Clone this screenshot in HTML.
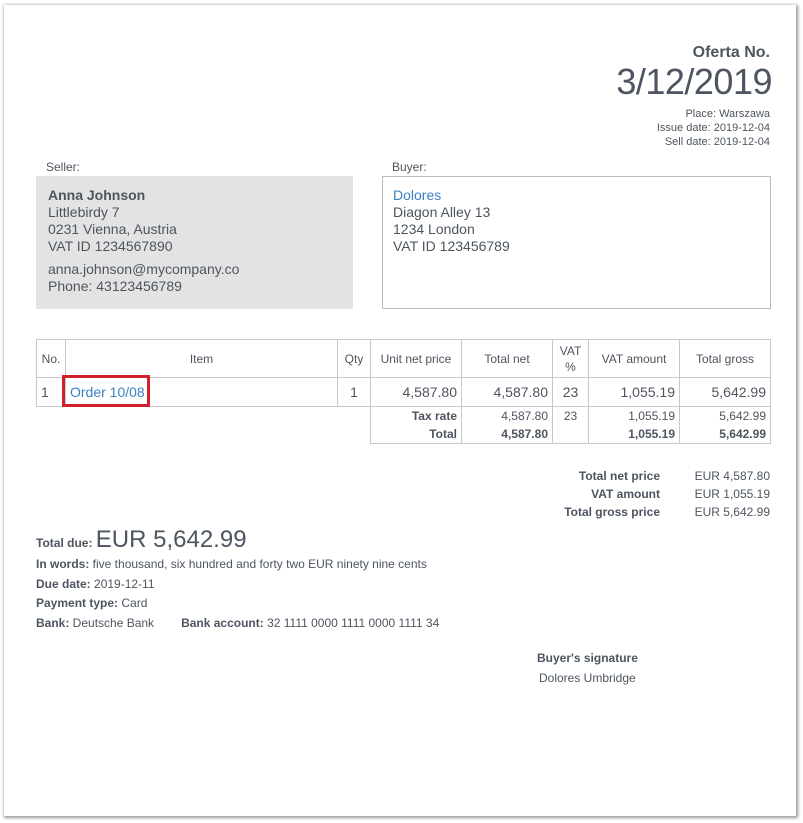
<!DOCTYPE html>
<html><head><style>
body{margin:0;width:803px;height:823px;background:#fff;font-family:"Liberation Sans",Arial,sans-serif;color:#4d5560;position:relative;overflow:hidden}
.page{position:absolute;left:4px;top:5px;width:792px;height:811px;background:#fff;box-shadow:1px 1px 3px 1px #999}
.a{position:absolute;white-space:nowrap}
.r{text-align:right}
b{font-weight:bold}
table{position:absolute;left:36px;top:339px;border-collapse:collapse;font-size:12px}
td{border:1px solid #c8c8c8;padding:0 4px;height:37px}
.body td{height:28px;font-size:14px;line-height:14px;vertical-align:middle}
.sum td{height:18px;border:none;font-size:12px}
.sum td.l{border-left:1px solid #c8c8c8}
</style></head><body>
<div class="page"></div>
<div class="a r" style="right:33px;top:44px;font-size:16px;font-weight:bold">Oferta No.</div>
<div class="a r" style="right:31px;top:61px;font-size:36px;letter-spacing:-0.5px">3/12/2019</div>
<div class="a r" style="right:33px;top:107px;font-size:11px;line-height:14px">Place: Warszawa<br>Issue date: 2019-12-04<br>Sell date: 2019-12-04</div>
<div class="a" style="left:46px;top:160px;font-size:12px">Seller:</div>
<div class="a" style="left:392px;top:160px;font-size:12px">Buyer:</div>
<div class="a" style="left:36px;top:176px;width:317px;height:133px;background:#e3e3e3"></div>
<div class="a" style="left:48px;top:187px;font-size:14px;line-height:17px"><b>Anna Johnson</b><br>Littlebirdy 7<br>0231 Vienna, Austria<br>VAT ID 1234567890<div style="height:6px"></div>anna.johnson@mycompany.co<br>Phone: 43123456789</div>
<div class="a" style="left:382px;top:176px;width:387px;height:131px;border:1px solid #bbb"></div>
<div class="a" style="left:393px;top:187px;font-size:14px;line-height:17px"><span style="color:#3b80c2">Dolores</span><br>Diagon Alley 13<br>1234 London<br>VAT ID 123456789</div>
<table>
<tr style="text-align:center"><td style="width:20px">No.</td><td style="width:263px">Item</td><td style="width:24px">Qty</td><td style="width:82px">Unit net price</td><td style="width:82px">Total net</td><td style="width:27px;line-height:16px">VAT<br>%</td><td style="width:82px">VAT amount</td><td style="width:82px">Total gross</td></tr>
<tr class="body"><td>1</td><td style="color:#3b80c2">Order 10/08</td><td style="text-align:center">1</td><td class="r">4,587.80</td><td class="r">4,587.80</td><td style="text-align:center">23</td><td class="r">1,055.19</td><td class="r">5,642.99</td></tr>
<tr class="sum"><td style="border:none"></td><td style="border:none"></td><td style="border:none"></td><td class="r l" style="border-left:1px solid #c8c8c8"><b>Tax rate</b></td><td class="r l">4,587.80</td><td class="l" style="text-align:center">23</td><td class="r l">1,055.19</td><td class="r l" style="border-right:1px solid #c8c8c8">5,642.99</td></tr>
<tr class="sum"><td style="border:none"></td><td style="border:none"></td><td style="border:none"></td><td class="r l" style="border-bottom:1px solid #c8c8c8"><b>Total</b></td><td class="r l" style="border-bottom:1px solid #c8c8c8"><b>4,587.80</b></td><td class="l" style="border-bottom:1px solid #c8c8c8"></td><td class="r l" style="border-bottom:1px solid #c8c8c8"><b>1,055.19</b></td><td class="r l" style="border-right:1px solid #c8c8c8;border-bottom:1px solid #c8c8c8"><b>5,642.99</b></td></tr>
</table>
<div class="a" style="left:62px;top:375px;width:82px;height:26px;border:3px solid #d0202a"></div>
<div class="a r" style="right:143px;top:467px;font-size:12px;line-height:18px;font-weight:bold">Total net price<br>VAT amount<br>Total gross price</div>
<div class="a r" style="right:33px;top:467px;font-size:12px;line-height:18px">EUR 4,587.80<br>EUR 1,055.19<br>EUR 5,642.99</div>
<div class="a" style="left:36px;top:526px;font-size:12px"><b>Total due:</b> <span style="font-size:24px">EUR 5,642.99</span></div>
<div class="a" style="left:36px;top:555px;font-size:12px;line-height:19.5px"><b>In words:</b> five thousand, six hundred and forty two EUR ninety nine cents<br><b>Due date:</b> 2019-12-11<br><b>Payment type:</b> Card<br><b>Bank:</b> Deutsche Bank<span style="display:inline-block;width:27px"></span><b>Bank account:</b> 32 1111 0000 1111 0000 1111 34</div>
<div class="a" style="left:537px;top:651px;font-size:12px;font-weight:bold">Buyer's signature</div>
<div class="a" style="left:539px;top:671px;font-size:12px">Dolores Umbridge</div>
</body></html>
